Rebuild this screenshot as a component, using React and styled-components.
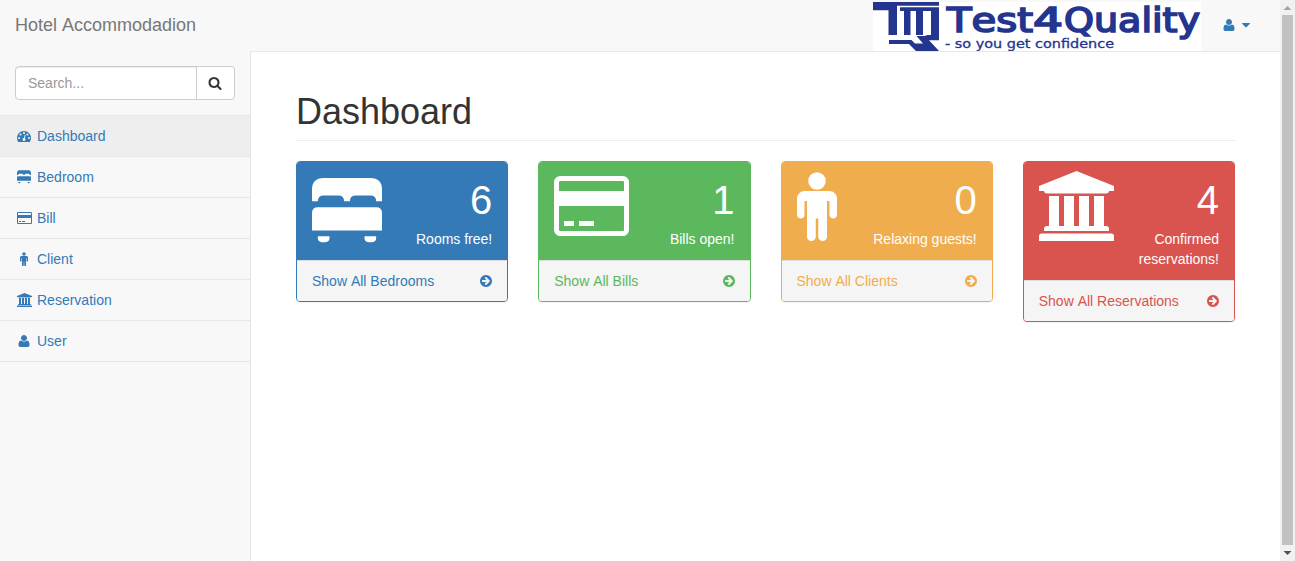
import React from 'react';
import styled, { createGlobalStyle } from 'styled-components';

const Global = createGlobalStyle`
  * { box-sizing: border-box; }
  html, body { margin: 0; height: 100%; overflow: hidden; }
  body { font: 14px/20px "Liberation Sans", Arial, sans-serif; font-kerning: none; color: #333; background: #fff; }
`;

const BLUE = '#337ab7';

const Window = styled.div`display: flex; height: 561px; width: 1295px;`;
const Page = styled.div`display: flex; flex-direction: column; width: 1280px; background: #f8f8f8;`;
const Navbar = styled.header`
  display: flex; justify-content: space-between; height: 51px; flex: none;
`;
const Brand = styled.a`padding: 15px; font-size: 18px; color: #777;`;
const NavRight = styled.div`display: flex; align-items: flex-start;`;
const LogoSvg = styled.svg`display: block; margin-top: 2px; background: #fff; overflow: visible;`;
const UserMenu = styled.a`
  display: flex; align-items: center; height: 50px; padding: 0 30px 0 19px; gap: 4px; color: ${BLUE};
`;
const Body = styled.div`display: flex; flex: 1; min-height: 0;`;
const Sidebar = styled.nav`width: 250px; flex: none;`;
const Search = styled.div`display: flex; padding: 15px; border-bottom: 1px solid #e7e7e7;`;
const Input = styled.input`
  flex: 1; min-width: 0; height: 34px; padding: 6px 12px; border: 1px solid #ccc; border-radius: 4px 0 0 4px;
  font: 14px/20px "Liberation Sans", Arial, sans-serif; background: #fff; outline: 0;
  box-shadow: inset 0 1px 1px rgba(0,0,0,.075);
  &::placeholder { color: #999; opacity: 1; }
`;
const SearchButton = styled.button`
  display: flex; align-items: center; justify-content: center; width: 39px; height: 34px; margin-left: -1px; padding: 0 1px 0 0;
  border: 1px solid #ccc; border-radius: 0 4px 4px 0; background: #fff; color: #333;
`;
const MenuItem = styled.a`
  display: flex; align-items: center; gap: 4px; height: 41px; padding: 0 15px;
  border-bottom: 1px solid #e7e7e7; color: ${BLUE};
  background: ${p => (p.$active ? '#eee' : 'transparent')};
`;
const FixedIcon = styled.span`display: flex; justify-content: center; width: 18px; flex: none;`;
const Main = styled.main`
  flex: 1; padding: 0 45px; background: #fff; border-left: 1px solid #e7e7e7; border-top: 1px solid #e7e7e7;
`;
const Title = styled.h1`
  margin: 40px 0 20px; padding-bottom: 9px; border-bottom: 1px solid #eee;
  font-size: 36px; line-height: 39px; font-weight: 500;
`;
const Cards = styled.div`display: grid; grid-template-columns: repeat(4, 1fr); gap: 30px; align-items: start;`;
const Card = styled.section`
  border: 1px solid ${p => p.$color}; border-radius: 4px; background: #fff; box-shadow: 0 1px 1px rgba(0,0,0,.05);
`;
const CardHead = styled.div`
  display: flex; justify-content: space-between; padding: 10px 15px 11px; color: #fff; background: ${p => p.$color};
  border-radius: 3px 3px 0 0;
`;
const BigIcon = styled.div`width: 0; height: 70px; margin-top: -1px;`;
const Stat = styled.div`width: 127px; text-align: right;`;
const Count = styled.div`font-size: 40px; line-height: 57px;`;
const CardFoot = styled.a`
  display: flex; justify-content: space-between; align-items: center; padding: 10px 15px;
  border-top: 1px solid #ddd; border-radius: 0 0 3px 3px; background: #f5f5f5; color: ${p => p.$color};
`;
const Scrollbar = styled.div`
  display: flex; flex-direction: column; align-items: center; width: 15px; background: #f1f1f1;
`;
const Thumb = styled.div`width: 11px; flex: 1; background: #c1c1c1;`;
const Glyph = styled.svg`display: block; flex: none; overflow: visible;`;

const icons = {
  dashboard: [1792, 'M384 1152q0-53-37.5-90.5t-90.5-37.5-90.5 37.5-37.5 90.5 37.5 90.5 90.5 37.5 90.5-37.5 37.5-90.5zm192-448q0-53-37.5-90.5t-90.5-37.5-90.5 37.5-37.5 90.5 37.5 90.5 90.5 37.5 90.5-37.5 37.5-90.5zm428 481l101-382q6-26-7.5-48.5t-38.5-29.5-48 6.5-30 39.5l-101 382q-60 5-107 43.5t-63 98.5q-20 77 20 146t117 89 146-20 89-117q16-60-6-117t-72-91zm660-33q0-53-37.5-90.5t-90.5-37.5-90.5 37.5-37.5 90.5 37.5 90.5 90.5 37.5 90.5-37.5 37.5-90.5zm-640-640q0-53-37.5-90.5t-90.5-37.5-90.5 37.5-37.5 90.5 37.5 90.5 90.5 37.5 90.5-37.5 37.5-90.5zm448 192q0-53-37.5-90.5t-90.5-37.5-90.5 37.5-37.5 90.5 37.5 90.5 90.5 37.5 90.5-37.5 37.5-90.5zm320 448q0 261-141 483-19 29-54 29h-1402q-35 0-54-29-141-221-141-483 0-182 71-348t191-286 286-191 348-71 348 71 286 191 191 286 71 348z'],
  bill: [1920, 'M1760 128q66 0 113 47t47 113v1216q0 66-47 113t-113 47h-1600q-66 0-113-47t-47-113v-1216q0-66 47-113t113-47h1600zm-1600 128q-13 0-22.5 9.5t-9.5 22.5v224h1664v-224q0-13-9.5-22.5t-22.5-9.5h-1600zm1600 1280q13 0 22.5-9.5t9.5-22.5v-608h-1664v608q0 13 9.5 22.5t22.5 9.5h1600zm-1504-128v-128h256v128h-256zm384 0v-128h384v128h-384z'],
  client: [1024, 'M1024 704v416q0 40-28 68t-68 28-68-28-28-68v-352h-64v912q0 46-33 79t-79 33-79-33-33-79v-464h-64v464q0 46-33 79t-79 33-79-33-33-79v-912h-64v352q0 40-28 68t-68 28-68-28-28-68v-416q0-80 56-136t136-56h640q80 0 136 56t56 136zM736 256a224 224 0 1 1-448 0a224 224 0 1 1 448 0z'],
  bank: [1920, 'M960 0l960 384v128h-128q0 26-20.5 45t-48.5 19h-1526q-28 0-48.5-19t-20.5-45h-128v-128zm-704 640h256v768h128v-768h256v768h128v-768h256v768h128v-768h256v768h59q28 0 48.5 19t20.5 45v64h-1664v-64q0-26 20.5-45t48.5-19h59v-768zm1595 960q28 0 48.5 19t20.5 45v128h-1920v-128q0-26 20.5-45t48.5-19h1782z'],
  user: [1792, 'M1600 1405q0 120-73 189.5t-194 69.5h-874q-121 0-194-69.5t-73-189.5q0-53 3.5-103.5t14-109 26.5-108.5 43-97.5 62-81 85.5-53.5 111.5-20q9 0 42 21.5t74.5 48 108 48 133.5 21.5 133.5-21.5 108-48 74.5-48 42-21.5q61 0 111.5 20t85.5 53.5 62 81 43 97.5 26.5 108.5 14 109 3.5 103.5zm-320-893q0 159-112.5 271.5t-271.5 112.5-271.5-112.5-112.5-271.5 112.5-271.5 271.5-112.5 271.5 112.5 112.5 271.5z'],
  search: [1792, 'M1216 832q0-185-131.5-316.5t-316.5-131.5-316.5 131.5-131.5 316.5 131.5 316.5 316.5 131.5 316.5-131.5 131.5-316.5zm512 832q0 52-38 90t-90 38q-54 0-90-38l-343-342q-179 124-399 124-143 0-273.5-55.5t-225-150-150-225-55.5-273.5 55.5-273.5 150-225 225-150 273.5-55.5 273.5 55.5 225 150 150 225 55.5 273.5q0 220-124 399l343 343q37 37 37 90z'],
  arrow: [1536, 'M1285 896q0-27-18-45l-362-362-91-91q-18-18-45-18t-45 18l-91 91q-18 18-18 45t18 45l189 189h-502q-26 0-45 19t-19 45v128q0 26 19 45t45 19h502l-189 189q-19 19-19 45t19 45l91 91q18 18 45 18t45-18l91-91 362-362q18-18 18-45zm251 0q0 209-103 385.5t-279.5 279.5-385.5 103-385.5-103-279.5-279.5-103-385.5 103-385.5 279.5-279.5 385.5-103 385.5 103 279.5 279.5 103 385.5z'],
  caret: [1024, 'M1024 704q0 26-19 45l-448 448q-19 19-45 19t-45-19l-448-448q-19-19-19-45t19-45 45-19h896q26 0 45 19t19 45z'],
};

function Icon({ name, size = 14 }) {
  if (name === 'bed') {
    return (
      <Glyph width={size} height={size} viewBox={size > 20 ? '0 -1.2 12 12' : '0 -0.3 12 12'} fill="currentColor">
        <path d="M0 4V2Q0 0 2 0H10Q12 0 12 2V4H11Q11 3 10 3H7.5Q6.5 3 6.5 4H5.5Q5.5 3 4.5 3H2Q1 3 1 4ZM0 9V6Q0 5 1 5H11Q12 5 12 6V9ZM1 10H3V10.3Q3 11 2.3 11H1.7Q1 11 1 10.3ZM9 10H11V10.3Q11 11 10.3 11H9.7Q9 11 9 10.3Z" />
      </Glyph>
    );
  }
  const [w, d] = icons[name];
  return (
    <Glyph width={(size * w) / 1792} height={size} viewBox={`0 0 ${w} 1792`} fill="currentColor">
      <path d={d} />
    </Glyph>
  );
}

const LogoText = styled.text`
  font-family: "DejaVu Sans", sans-serif; font-size: ${p => p.$size}px;
  stroke: #24358f; stroke-width: ${p => p.$stroke}px;
`;

function Logo() {
  return (
    <LogoSvg width="328" height="49" viewBox="0 0 328 49" fill="#24358f">
      <path d="M0 0H66V3.700H24V33H15.500V8.300H0ZM27 5.300H66V38.300H56L66 49H43L36 42H16V38H38.500L42 41.500H50L43.500 34H52L54 33H58V9H50V33H43V9H37.500V33H31V9H27Z" />
      <LogoText $size={33} $stroke={1.7} x="74" y="29.500" textLength="86" lengthAdjust="spacingAndGlyphs">Test</LogoText>
      <LogoText $size={33} $stroke={1.7} x="160" y="29.500" textLength="30" lengthAdjust="spacingAndGlyphs">4</LogoText>
      <LogoText $size={33} $stroke={1.7} x="191" y="29.500" textLength="136" lengthAdjust="spacingAndGlyphs">Quality</LogoText>
      <LogoText $size={12} $stroke={0.3} x="72" y="46.300" textLength="169" lengthAdjust="spacingAndGlyphs">- so you get confidence</LogoText>
    </LogoSvg>
  );
}

const menu = [
  ['dashboard', 'Dashboard'], ['bed', 'Bedroom'], ['bill', 'Bill'],
  ['client', 'Client'], ['bank', 'Reservation'], ['user', 'User'],
];
const cards = [
  ['bed', 6, 'Rooms free!', 'Show All Bedrooms', '#337ab7'],
  ['bill', 1, 'Bills open!', 'Show All Bills', '#5cb85c'],
  ['client', 0, 'Relaxing guests!', 'Show All Clients', '#f0ad4e'],
  ['bank', 4, 'Confirmed reservations!', 'Show All Reservations', '#d9534f'],
];

export default function App() {
  return (
    <Window>
      <Global />
      <Page>
        <Navbar>
          <Brand>Hotel Accommodadion</Brand>
          <NavRight>
            <Logo />
            <UserMenu><FixedIcon><Icon name="user" /></FixedIcon><Icon name="caret" /></UserMenu>
          </NavRight>
        </Navbar>
        <Body>
          <Sidebar>
            <Search>
              <Input placeholder="Search..." />
              <SearchButton aria-label="Search"><Icon name="search" /></SearchButton>
            </Search>
            {menu.map(([icon, label], i) => (
              <MenuItem key={label} $active={i === 0}>
                <FixedIcon><Icon name={icon} /></FixedIcon>{label}
              </MenuItem>
            ))}
          </Sidebar>
          <Main>
            <Title>Dashboard</Title>
            <Cards>
              {cards.map(([icon, count, text, link, color]) => (
                <Card key={link} $color={color}>
                  <CardHead $color={color}>
                    <BigIcon><Icon name={icon} size={70} /></BigIcon>
                    <Stat><Count>{count}</Count><div>{text}</div></Stat>
                  </CardHead>
                  <CardFoot $color={color}><span>{link}</span><Icon name="arrow" /></CardFoot>
                </Card>
              ))}
            </Cards>
          </Main>
        </Body>
      </Page>
      <Scrollbar>
        <Glyph width="15" height="15" fill="#a3a3a3"><path d="M3.500 10L7.500 6L11.500 10Z" /></Glyph>
        <Thumb />
        <Glyph width="15" height="16" fill="#505050"><path d="M3.500 6L7.500 10L11.500 6Z" /></Glyph>
      </Scrollbar>
    </Window>
  );
}
